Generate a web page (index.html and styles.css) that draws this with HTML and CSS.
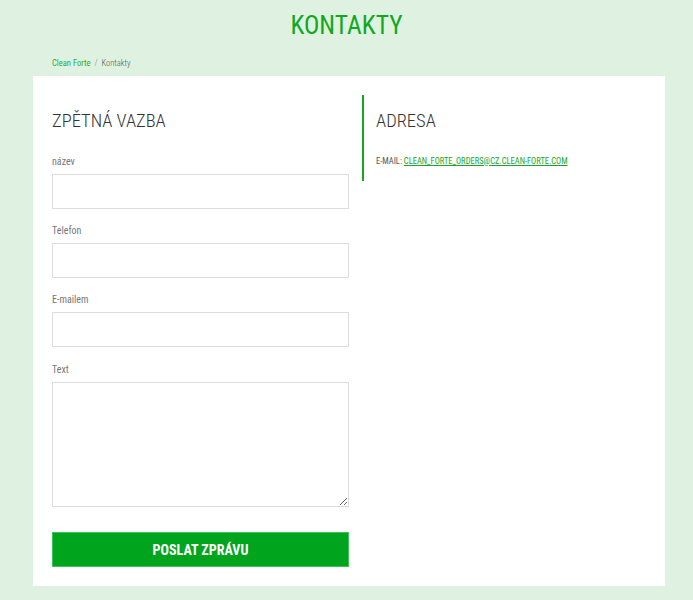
FILE: index.html
```html
<!DOCTYPE html>
<html lang="cs">
<head>
<meta charset="utf-8">
<title>Kontakty</title>
<link rel="stylesheet" href="styles.css">
</head>
<body>
<h1 class="page-title">KONTAKTY</h1>
<nav class="breadcrumb"><a href="#">Clean Forte</a><span class="sep">/</span><span>Kontakty</span></nav>
<main class="card">
  <section class="feedback">
    <h2 class="section-title">ZPĚTNÁ VAZBA</h2>
    <form class="form">
      <label class="field"><span class="label">název</span><input class="input" type="text"></label>
      <label class="field"><span class="label">Telefon</span><input class="input" type="text"></label>
      <label class="field field-mail"><span class="label">E-mailem</span><input class="input" type="text"></label>
      <label class="field field-text"><span class="label">Text</span><textarea class="textarea"></textarea></label>
      <button class="submit" type="button">POSLAT ZPRÁVU</button>
    </form>
  </section>
  <section class="address">
    <h2 class="section-title">ADRESA</h2>
    <p class="email">E-MAIL: <a href="#">CLEAN_FORTE_ORDERS@CZ.CLEAN-FORTE.COM</a></p>
  </section>
</main>
</body>
</html>
```
FILE: styles.css
```css
* { box-sizing: border-box; }
body {
  margin: 0;
  background: #dff2e1;
  font-family: "Roboto Condensed", "Liberation Sans Narrow", "DejaVu Sans Condensed", Roboto, sans-serif;
  color: #333;
}
.page-title {
  margin: 0;
  padding-top: 9px;
  height: 54px;
  text-align: center;
  color: #0fa81f;
  font-size: 25.5px;
  font-weight: 400;
  line-height: 32px;
}
.breadcrumb {
  padding: 0 0 0 52px;
  height: 22px;
  font-size: 8.5px;
  line-height: 18px;
  color: #555;
  font-weight: 300;
}
.breadcrumb a { color: #2daa3b; text-decoration: none; font-weight: 400; }
.breadcrumb .sep { margin: 0 4px; color: #777; }
.card {
  margin: 0 28px 0 33px;
  background: #fff;
  padding: 19px;
  display: grid;
  grid-template-columns: 297px 1fr;
  column-gap: 13px;
  align-items: start;
}
.section-title {
  margin: 0;
  font-size: 18.5px;
  font-weight: 300;
  line-height: 24px;
  color: #333;
}
.feedback .section-title { margin-top: 14px; margin-bottom: 23px; }
.form { display: flex; flex-direction: column; }
.field { display: flex; flex-direction: column; margin-bottom: 16px; }
.field-mail { margin-bottom: 17px; }
.label { font-size: 10px; line-height: 12px; color: #777; margin-bottom: 6px; }
.input {
  height: 35px;
  border: 1px solid #ddd;
  background: #fff;
  outline: none;
}
.textarea {
  height: 125px;
  border: 1px solid #ddd;
  resize: vertical;
  font: inherit;
}
.field-text { margin-bottom: 25px; }
.submit {
  height: 35px;
  border: 1px solid #3cc35a;
  background: #00a51d;
  color: #fff;
  font-family: inherit;
  font-size: 14px;
  font-weight: 700;
  cursor: pointer;
}
.address {
  border-left: 2px solid #0fa81f;
  padding: 14px 0 14px 12px;
}
.address .section-title { margin-bottom: 22px; }
.email {
  margin: 0;
  font-size: 8.5px;
  line-height: 12px;
  color: #555;
}
.email a { color: #17a52a; }
```
